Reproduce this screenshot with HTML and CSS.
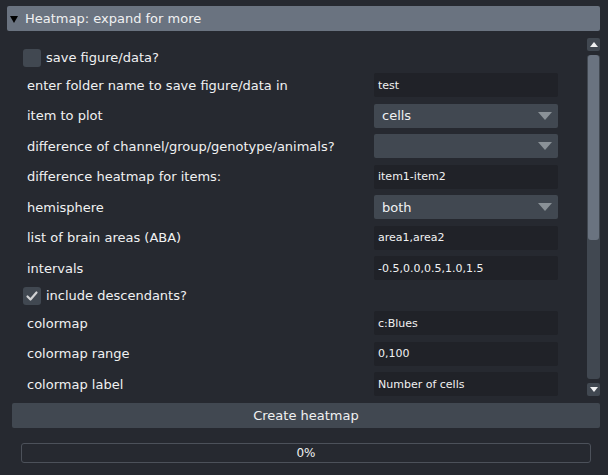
FILE: index.html
```html
<!DOCTYPE html>
<html>
<head>
<meta charset="utf-8">
<link rel="stylesheet" href="styles.css">
</head>
<body>
<div class="header"><span class="caret"></span>Heatmap: expand for more</div>
<div class="scroll">
  <div class="form">
    <div class="row check"><span class="box"></span><span>save figure/data?</span></div>
    <div class="row"><span class="label">enter folder name to save figure/data in</span><span class="input">test</span></div>
    <div class="row"><span class="label">item to plot</span><span class="combo">cells<i class="arrow"></i></span></div>
    <div class="row"><span class="label">difference of channel/group/genotype/animals?</span><span class="combo"><i class="arrow"></i></span></div>
    <div class="row"><span class="label">difference heatmap for items:</span><span class="input">item1-item2</span></div>
    <div class="row"><span class="label">hemisphere</span><span class="combo">both<i class="arrow"></i></span></div>
    <div class="row"><span class="label">list of brain areas (ABA)</span><span class="input">area1,area2</span></div>
    <div class="row"><span class="label">intervals</span><span class="input">-0.5,0.0,0.5,1.0,1.5</span></div>
    <div class="row check"><span class="box"><svg width="18" height="18" viewBox="0 0 18 18"><polyline points="4.5,9.5 7.5,12.5 13.5,5.5" fill="none" stroke="#d1d2d4" stroke-width="2.2" stroke-linecap="round" stroke-linejoin="round"/></svg></span><span>include descendants?</span></div>
    <div class="row"><span class="label">colormap</span><span class="input">c:Blues</span></div>
    <div class="row"><span class="label">colormap range</span><span class="input">0,100</span></div>
    <div class="row"><span class="label">colormap label</span><span class="input">Number of cells</span></div>
  </div>
  <div class="scrollbar">
    <div class="sbtn"><i class="up"></i></div>
    <div class="track"><div class="handle"></div></div>
    <div class="sbtn"><i class="down"></i></div>
  </div>
</div>
<div class="run">Create heatmap</div>
<div class="progress">0%</div>
</body>
</html>
```
FILE: styles.css
```css
html, body {
  margin: 0;
  padding: 0;
  background: #262930;
  color: #f0f1f2;
  font-family: "DejaVu Sans", sans-serif;
  font-size: 13px;
}
body {
  width: 608px;
  height: 475px;
  overflow: hidden;
}
.header {
  margin: 6px 8px 0 7px;
  height: 25px;
  background: #6a7380;
  border-radius: 2px;
  display: flex;
  align-items: center;
}
.caret {
  width: 0;
  height: 0;
  border-left: 4px solid transparent;
  border-right: 4px solid transparent;
  border-top: 7px solid #000;
  margin: 1px 7px 0 3px;
}
.scroll {
  margin: 6px 8px 0 12px;
  height: 360px;
  display: flex;
  overflow: hidden;
}
.form {
  flex: 1;
  padding: 11.5px 29px 0 11px;
  display: flex;
  flex-direction: column;
  gap: 6.5px;
}
.row {
  height: 24px;
  flex: none;
  display: flex;
  align-items: center;
  justify-content: space-between;
}
.row.check {
  height: 18px;
  justify-content: flex-start;
  gap: 5px;
}
.label {
  margin-left: 4px;
}
.box {
  width: 18px;
  height: 18px;
  background: #414851;
  border-radius: 3px;
  display: block;
}
.box svg { display: block; }
.input, .combo {
  width: 184px;
  height: 24px;
  box-sizing: border-box;
  border-radius: 2px;
  display: flex;
  align-items: center;
}
.input {
  background: #202228;
  font-size: 11px;
  padding-left: 4px;
}
.combo {
  background: #414851;
  padding-left: 8px;
  position: relative;
}
.arrow {
  position: absolute;
  right: 6px;
  top: 8px;
  width: 0;
  height: 0;
  border-left: 7px solid transparent;
  border-right: 7px solid transparent;
  border-top: 8px solid #8a9197;
}
.scrollbar {
  width: 13px;
  padding-top: 1px;
  display: flex;
  flex-direction: column;
  gap: 4px;
}
.sbtn {
  height: 13px;
  background: #414851;
  border-radius: 2px;
  display: flex;
  align-items: center;
  justify-content: center;
}
.up, .down {
  width: 0;
  height: 0;
  border-left: 4px solid transparent;
  border-right: 4px solid transparent;
}
.up { border-bottom: 5px solid #f0f1f2; }
.down { border-top: 5px solid #f0f1f2; }
.track {
  height: 324px;
  background: #414851;
  border-radius: 3px;
  overflow: hidden;
}
.handle {
  height: 185px;
  background: #6a7380;
  border-radius: 3px;
  margin: 0 1px;
}
.run {
  margin: 6px 8px 0 12px;
  height: 25px;
  background: #414851;
  border-radius: 2px;
  display: flex;
  align-items: center;
  justify-content: center;
}
.progress {
  margin: 15px 17px 0 21px;
  height: 20px;
  box-sizing: border-box;
  border: 1px solid #4c515a;
  border-radius: 3px;
  display: flex;
  align-items: center;
  justify-content: center;
  font-size: 12px;
}
```
